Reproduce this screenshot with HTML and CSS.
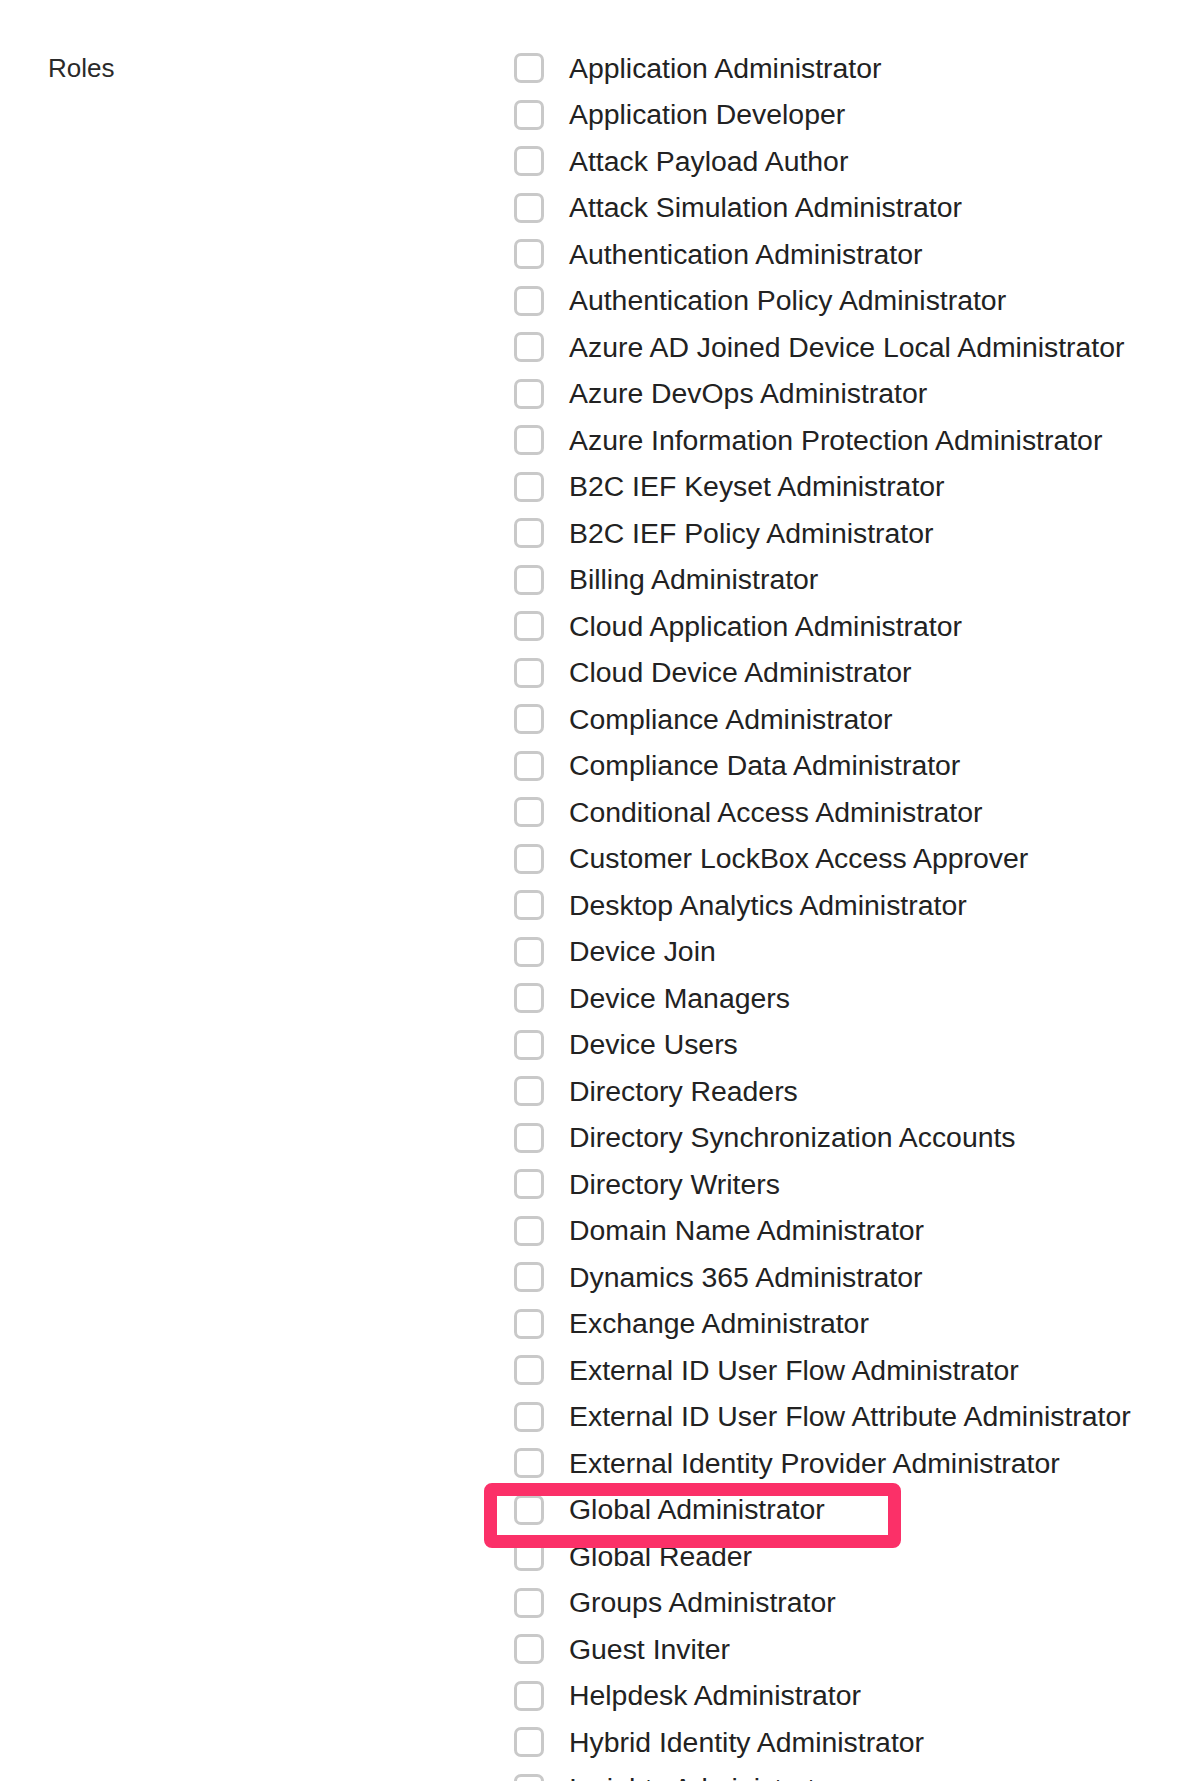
FILE: index.html
```html
<!DOCTYPE html>
<html lang="en">
<head>
    <meta charset="UTF-8">
    <title>Roles</title>
    <link rel="stylesheet" href="styles.css">
</head>
<body>
    <div class="form-row">
        <div class="field-label">Roles</div>

        <div class="role-list">
            <label class="role"><input type="checkbox" class="role-check"><span>Application Administrator</span></label>
            <label class="role"><input type="checkbox" class="role-check"><span>Application Developer</span></label>
            <label class="role"><input type="checkbox" class="role-check"><span>Attack Payload Author</span></label>
            <label class="role"><input type="checkbox" class="role-check"><span>Attack Simulation Administrator</span></label>
            <label class="role"><input type="checkbox" class="role-check"><span>Authentication Administrator</span></label>
            <label class="role"><input type="checkbox" class="role-check"><span>Authentication Policy Administrator</span></label>
            <label class="role"><input type="checkbox" class="role-check"><span>Azure AD Joined Device Local Administrator</span></label>
            <label class="role"><input type="checkbox" class="role-check"><span>Azure DevOps Administrator</span></label>
            <label class="role"><input type="checkbox" class="role-check"><span>Azure Information Protection Administrator</span></label>
            <label class="role"><input type="checkbox" class="role-check"><span>B2C IEF Keyset Administrator</span></label>
            <label class="role"><input type="checkbox" class="role-check"><span>B2C IEF Policy Administrator</span></label>
            <label class="role"><input type="checkbox" class="role-check"><span>Billing Administrator</span></label>
            <label class="role"><input type="checkbox" class="role-check"><span>Cloud Application Administrator</span></label>
            <label class="role"><input type="checkbox" class="role-check"><span>Cloud Device Administrator</span></label>
            <label class="role"><input type="checkbox" class="role-check"><span>Compliance Administrator</span></label>
            <label class="role"><input type="checkbox" class="role-check"><span>Compliance Data Administrator</span></label>
            <label class="role"><input type="checkbox" class="role-check"><span>Conditional Access Administrator</span></label>
            <label class="role"><input type="checkbox" class="role-check"><span>Customer LockBox Access Approver</span></label>
            <label class="role"><input type="checkbox" class="role-check"><span>Desktop Analytics Administrator</span></label>
            <label class="role"><input type="checkbox" class="role-check"><span>Device Join</span></label>
            <label class="role"><input type="checkbox" class="role-check"><span>Device Managers</span></label>
            <label class="role"><input type="checkbox" class="role-check"><span>Device Users</span></label>
            <label class="role"><input type="checkbox" class="role-check"><span>Directory Readers</span></label>
            <label class="role"><input type="checkbox" class="role-check"><span>Directory Synchronization Accounts</span></label>
            <label class="role"><input type="checkbox" class="role-check"><span>Directory Writers</span></label>
            <label class="role"><input type="checkbox" class="role-check"><span>Domain Name Administrator</span></label>
            <label class="role"><input type="checkbox" class="role-check"><span>Dynamics 365 Administrator</span></label>
            <label class="role"><input type="checkbox" class="role-check"><span>Exchange Administrator</span></label>
            <label class="role"><input type="checkbox" class="role-check"><span>External ID User Flow Administrator</span></label>
            <label class="role"><input type="checkbox" class="role-check"><span>External ID User Flow Attribute Administrator</span></label>
            <label class="role"><input type="checkbox" class="role-check"><span>External Identity Provider Administrator</span></label>
            <label class="role highlighted"><input type="checkbox" class="role-check"><span>Global Administrator</span></label>
            <label class="role"><input type="checkbox" class="role-check"><span>Global Reader</span></label>
            <label class="role"><input type="checkbox" class="role-check"><span>Groups Administrator</span></label>
            <label class="role"><input type="checkbox" class="role-check"><span>Guest Inviter</span></label>
            <label class="role"><input type="checkbox" class="role-check"><span>Helpdesk Administrator</span></label>
            <label class="role"><input type="checkbox" class="role-check"><span>Hybrid Identity Administrator</span></label>
            <label class="role"><input type="checkbox" class="role-check"><span>Insights Administrator</span></label>
        </div>
    </div>
</body>
</html>
```

FILE: styles.css
```css
* {
    margin: 0;
    padding: 0;
    box-sizing: border-box;
}

html, body {
    height: 100vh;
    overflow: hidden;
}

body {
    font-family: "Liberation Sans", Arial, sans-serif;
    background: #fff;
    color: #222;
}

.form-row {
    display: grid;
    grid-template-columns: 466px 1fr;
    padding: 45px 0 0 48px;
}

.field-label {
    font-size: 26px;
    line-height: 46.5px;
    color: #2a2a2a;
}

.role-list {
    display: flex;
    flex-direction: column;
}

.role {
    position: relative;
    display: flex;
    align-items: center;
    gap: 25px;
    height: 46.5px;
    font-size: 28.4px;
    white-space: nowrap;
    cursor: pointer;
}

.role-check {
    appearance: none;
    -webkit-appearance: none;
    flex: none;
    width: 30px;
    height: 30px;
    border: 3px solid #c9c9c9;
    border-radius: 7px;
    background: #fff;
    margin: 0;
}

/* red annotation box drawn on top of the row */
.highlighted::after {
    content: "";
    box-sizing: border-box;
    position: absolute;
    left: -30px;
    top: -4px;
    width: 417px;
    height: 65px;
    border: 13px solid #fb3068;
    border-radius: 8px;
    pointer-events: none;
    z-index: 2;
}
```
